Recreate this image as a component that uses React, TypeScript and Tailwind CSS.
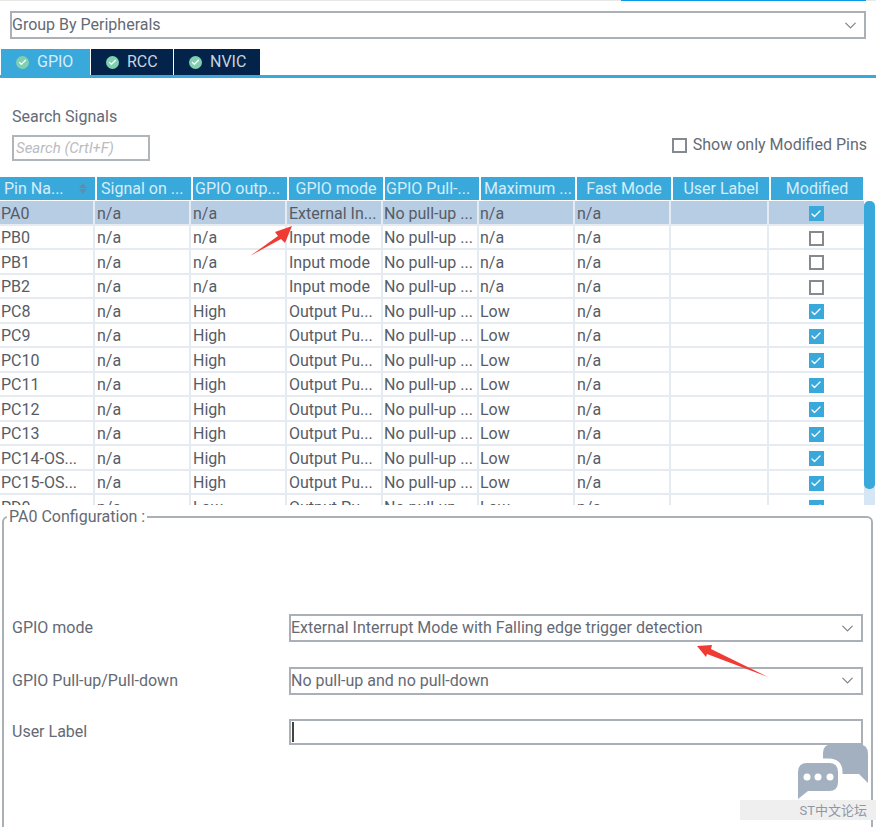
import { Check, ChevronDown } from "lucide-react";

const columns = [
  { label: "Signal on ...", cls: "pl-[4px]" },
  { label: "GPIO outp...", cls: "pl-[2px]" },
  { label: "GPIO mode", cls: "justify-center" },
  { label: "GPIO Pull-...", cls: "pl-[1px]" },
  { label: "Maximum ...", cls: "pl-[3px]" },
  { label: "Fast Mode", cls: "justify-center" },
  { label: "User Label", cls: "justify-center" },
  { label: "Modified", cls: "justify-center" },
];

const rows = [
  ["PA0", "n/a", "n/a", "External In...", "n/a", "n/a", true],
  ["PB0", "n/a", "n/a", "Input mode", "n/a", "n/a", false],
  ["PB1", "n/a", "n/a", "Input mode", "n/a", "n/a", false],
  ["PB2", "n/a", "n/a", "Input mode", "n/a", "n/a", false],
  ["PC8", "n/a", "High", "Output Pu...", "Low", "n/a", true],
  ["PC9", "n/a", "High", "Output Pu...", "Low", "n/a", true],
  ["PC10", "n/a", "High", "Output Pu...", "Low", "n/a", true],
  ["PC11", "n/a", "High", "Output Pu...", "Low", "n/a", true],
  ["PC12", "n/a", "High", "Output Pu...", "Low", "n/a", true],
  ["PC13", "n/a", "High", "Output Pu...", "Low", "n/a", true],
  ["PC14-OS...", "n/a", "High", "Output Pu...", "Low", "n/a", true],
  ["PC15-OS...", "n/a", "High", "Output Pu...", "Low", "n/a", true],
  ["PD0", "n/a", "Low", "Output Pu...", "Low", "n/a", true],
] as const;

const gridCols =
  "grid grid-cols-[95px_96px_96px_96px_96px_96px_96px_98px_94px]";

function TabIcon() {
  return (
    <span className="flex h-[13px] w-[13px] items-center justify-center rounded-full bg-[#7fd0b0]">
      <Check size={9} strokeWidth={3.5} className="text-white" />
    </span>
  );
}

function Tab({ label, active }: { label: string; active?: boolean }) {
  return (
    <div
      className={`flex h-[26px] items-center gap-[8px] pl-[15px] text-[16px] ${
        active ? "w-[89px] bg-[#39a9dc] text-[#d5edf8]" : "bg-[#03234b] text-[#c9d3de]"
      }`}
    >
      <TabIcon />
      <span>{label}</span>
    </div>
  );
}

function Select({ text, className }: { text: string; className: string }) {
  return (
    <div
      className={`flex h-[28px] items-center justify-between border-2 border-[#aab0b6] pr-[4px] text-[#646a75] ${className}`}
    >
      <span>{text}</span>
      <ChevronDown size={19} strokeWidth={1.5} className="text-[#7c8288]" />
    </div>
  );
}

function CheckCell({ on }: { on: boolean }) {
  return on ? (
    <span className="flex h-[15px] w-[15px] items-center justify-center bg-[#39a9dc]">
      <Check size={12} strokeWidth={2.5} className="text-white" />
    </span>
  ) : (
    <span className="h-[15px] w-[15px] border-2 border-[#858a90]" />
  );
}

function Field({ label, children }: { label: string; children: React.ReactNode }) {
  return (
    <div className="flex items-center">
      <span className="w-[277px] shrink-0 text-[#646a75]">{label}</span>
      {children}
    </div>
  );
}

export default function App() {
  return (
    <div className="relative h-[827px] w-[876px] overflow-hidden bg-white font-['Roboto',sans-serif] text-[16px] leading-none text-[#565c66]">
      <div className="flex h-[1px] justify-end border-t border-[#e8e8e8] pr-[10px]">
        <div className="-mt-[1px] h-[1px] w-[245px] bg-[#0a9be8]" />
      </div>

      <div className="px-[10px] pt-[10px]">
        <Select text="Group By Peripherals" className="h-[28px] w-[856px]" />
      </div>

      <div className="mt-[10px] flex gap-[1px] pl-[1px]">
        <Tab label="GPIO" active />
        <div className="w-[82px]">
          <Tab label="RCC" />
        </div>
        <div className="w-[86px]">
          <Tab label="NVIC" />
        </div>
      </div>
      <div className="h-[3px] bg-[#39a9dc]" />

      <div className="flex h-[99px] items-start justify-between pl-[12px] pr-[9px] pt-[31px]">
        <div>
          <div className="text-[#646a75]">Search Signals</div>
          <div className="mt-[10px] flex h-[26px] w-[138px] items-center border-2 border-[#b0b5ba] pl-[2px] text-[15px] italic text-[#b8bbc0]">
            Search (Crtl+F)
          </div>
        </div>
        <div className="mt-[28px] flex items-center gap-[6px]">
          <span className="h-[15px] w-[15px] border-2 border-[#858a90]" />
          <span className="text-[#646a75]">Show only Modified Pins</span>
        </div>
      </div>

      <div className="flex h-[328px] overflow-hidden">
        <div className="w-[864px] shrink-0">
          <div className={`${gridCols} h-[24px] gap-0 pb-[1px]`}>
            <div className="flex items-center justify-between bg-[#39a9dc] pl-[4px] pr-[8px] text-[#d5edf8]">
              <span>Pin Na...</span>
              <span className="flex flex-col gap-[1px]">
                <span className="h-0 w-0 border-x-[4px] border-b-[5px] border-x-transparent border-b-[#5f8fa8]" />
                <span className="h-0 w-0 border-x-[4px] border-t-[5px] border-x-transparent border-t-[#5f8fa8]" />
              </span>
            </div>
            {columns.map((c) => (
              <div
                key={c.label}
                className={`ml-[2px] flex items-center overflow-hidden whitespace-nowrap bg-[#39a9dc] text-[#d5edf8] ${c.cls}`}
              >
                {c.label}
              </div>
            ))}
          </div>
          {rows.map((r, i) => (
            <div
              key={r[0]}
              className={`${gridCols} h-[24.5px] border-b-2 border-[#e6ebf1] ${
                i === 0 ? "bg-[#b7cde3]" : "bg-white"
              }`}
            >
              {[r[0], r[1], r[2], r[3], "No pull-up ...", r[4], r[5], ""].map((t, j) => (
                <div
                  key={j}
                  className={`flex items-center overflow-hidden whitespace-nowrap border-r-2 border-[#e6ebf1] pt-[3px] ${
                    j === 0 || j === 4 || j === 5 ? "pl-[1px]" : "pl-[2px]"
                  }`}
                >
                  {t}
                </div>
              ))}
              <div className="flex items-center justify-center pt-[3px]">
                <CheckCell on={r[6]} />
              </div>
            </div>
          ))}
        </div>
        <div className="mt-[24px] w-[11px] rounded-t-[5px] bg-[#d6e6f5]">
          <div className="h-[288px] rounded-[5px] bg-[#39a9dc]" />
        </div>
      </div>

      <fieldset className="mx-[2px] mt-[4px] h-[400px] w-[871px] rounded-[6px] border-2 border-[#aab0b6] pl-[8px] pr-[8px]">
        <legend className="-ml-[5px] px-[2px] text-[#646a75]">PA0 Configuration :</legend>
        <div className="mt-[89px] flex flex-col gap-[24.5px]">
          <Field label="GPIO mode">
            <Select
              text="External Interrupt Mode with Falling edge trigger detection"
              className="w-[574px]"
            />
          </Field>
          <Field label="GPIO Pull-up/Pull-down">
            <Select text="No pull-up and no pull-down" className="w-[574px]" />
          </Field>
          <Field label="User Label">
            <div className="flex h-[26px] w-[574px] items-center border-2 border-[#aab0b6] pl-[1px]">
              <span className="h-[20px] w-[2px] bg-[#444]" />
            </div>
          </Field>
        </div>
      </fieldset>

      {/* red annotation arrows */}
      <svg className="absolute left-0 top-0" width="876" height="827" viewBox="0 0 876 827">
        <polygon points="292,226 275,232 278,236 250,256 281,239 285,243" fill="#f03a34" />
        <polygon points="697,646 712,645 711,649 768,677 707,654 706,657" fill="#f03a34" />
      </svg>

      {/* watermark */}
      <svg
        className="absolute left-[796px] top-[743px]"
        width="74"
        height="58"
        viewBox="0 0 74 58"
        fill="#a3b0c0"
      >
        <path d="M27 20V10Q27 1 37 1H62Q72 1 72 11V40L63 31H30Z" />
        <path
          d="M11 20H33Q42 20 42 29V39Q42 48 33 48H12L2 56V29Q2 20 11 20Z"
          stroke="#fff"
          strokeWidth="9"
          paintOrder="stroke"
        />
        <circle cx="11" cy="34" r="3.5" fill="#fff" />
        <circle cx="22" cy="34" r="3.5" fill="#fff" />
        <circle cx="34" cy="34" r="3.5" fill="#fff" />
      </svg>
      <div className="absolute left-[740px] top-[800px] flex h-[20px] w-[136px] items-center justify-end bg-[#efefef] pr-[9px] font-['Roboto','Noto_Sans_CJK_SC',sans-serif] text-[13px] text-[#8f97a3]">
        ST中文论坛
      </div>
    </div>
  );
}
